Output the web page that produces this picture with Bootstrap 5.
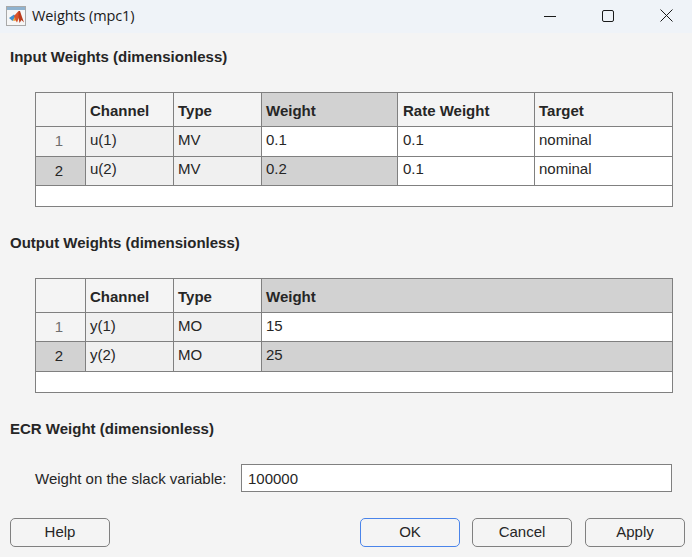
<!DOCTYPE html>
<html lang="en">
<head>
<meta charset="utf-8">
<title>Weights (mpc1)</title>
<link href="https://cdn.jsdelivr.net/npm/bootstrap@5.3.0/dist/css/bootstrap.min.css" rel="stylesheet">
<style>
html,body{height:100%;overflow:hidden}
body{background:#f4f4f4;font-family:"Liberation Sans",Arial,sans-serif;font-size:15px;color:#262626;display:flex;flex-direction:column}
.win-bar{height:33px;background:#eff3f8;padding:0 0 2px 6px;flex:none}
.win-title{font-family:"Open Sans","Noto Sans",sans-serif;font-size:14.5px;color:#1a1a1a;margin-left:6px;letter-spacing:-.1px}
.win-ctl{width:58px;height:31px;display:flex;align-items:center;justify-content:center}
.win-ctls{margin-left:auto;margin-right:-3px}
.sect-title{font-weight:700;font-size:15px;line-height:16px;color:#262626;margin:0 0 0 10px}
.grid-wrap{margin:0 20px 0 35px;flex:none}
.wt-grid{table-layout:fixed;width:637px;border-collapse:collapse;margin:0;background:#fff}
.wt-grid td,.wt-grid th{border:1px solid #808080;padding:0 3px 0 4px;font-size:15px;line-height:16px;color:#262626;vertical-align:middle;white-space:nowrap}
.wt-grid th{background:#f4f4f4;font-weight:700;height:34px;padding-top:2px}
.wt-grid td{height:30px;padding-bottom:3px;background:#fff}
.wt-grid tr.h29 td{height:29px;padding-bottom:5px}
.wt-grid tr.h29b td{height:29px;padding-bottom:3px}
.wt-grid td.ro{background:#f0f0f0}
.wt-grid .c5{padding-left:5px}
.wt-grid tr td.rownum{background:#f4f4f4;text-align:center;color:#6f6f6f;padding:0 3px 1px 0}
.wt-grid tr td.rownum.sel{color:#262626}
.wt-grid th.sel,.wt-grid td.sel,.wt-grid tr td.rownum.sel{background:#d2d2d2}
.wt-grid td.filler{height:21px;border-top:0;padding:0;background:#fff}
.slack-lbl{margin:0 15px 0 35px;color:#262626;white-space:nowrap;width:191px;padding-top:3px}
.slack-in{width:431px;height:28px;background:#fff;border:1px solid #808080;padding:0 6px;font-size:15px;color:#262626;border-radius:0;outline:0}
.act-btn{width:100px;height:29px;background:#f4f4f4;border:1px solid #808080;border-radius:5px;color:#262626;font-size:15px;line-height:23px;padding:0 0 2px}
.act-btn.dflt{border-color:#4a84ea}
.act-row{padding:0 7px 0 10px;gap:12px;margin-top:26px}
.act-spacer{margin-left:auto}
.apply-btn{margin-left:1px}
.slack-row{margin-top:27px}
.gap-a{height:16px}.gap-b{height:27px}.gap-c{height:28px}
</style>
</head>
<body>
<div class="win-bar d-flex align-items-center">
  <svg width="20" height="20" viewBox="0 0 20 20" aria-hidden="true">
    <rect x=".5" y=".5" width="19" height="19" fill="#f6f6f6" stroke="#a9a9a9"/>
    <rect x="1" y="1" width="18" height="3" fill="#8fb2cf"/>
    <path d="M3 12 8 8.500 10 10.500 6.500 15Z" fill="#3f8fd0"/>
    <path d="M8 10 12.500 5 14 9 11 16.500 9 13.500Z" fill="#d9542b"/>
    <path d="M12.500 5 14 5 16 11 18 16.500 15.500 14 13.500 17 12.500 11Z" fill="#b93a1c"/>
    <path d="M6.500 14.500 9 11 9.500 15Z" fill="#e9a23a"/>
  </svg>
  <span class="win-title">Weights (mpc1)</span>
  <div class="win-ctls d-flex">
    <div class="win-ctl"><svg width="12" height="12" viewBox="0 0 12 12"><path d="M0 6.500H12" stroke="#1a1a1a" fill="none"/></svg></div>
    <div class="win-ctl"><svg width="12" height="12" viewBox="0 0 12 12"><rect x=".5" y=".5" width="11" height="11" rx="1.500" stroke="#1a1a1a" fill="none"/></svg></div>
    <div class="win-ctl"><svg width="13" height="13" viewBox="0 0 13 13"><path d="M.5.5 12.500 12.500M12.500.5.500 12.500" stroke="#1a1a1a" fill="none"/></svg></div>
  </div>
</div>
<div class="gap-a"></div>
<h2 class="sect-title">Input Weights (dimensionless)</h2>
<div class="gap-b"></div>
<div class="grid-wrap">
  <table class="wt-grid">
    <colgroup><col style="width:50px"><col style="width:88px"><col style="width:88px"><col style="width:136px"><col style="width:137px"><col style="width:138px"></colgroup>
    <tr><th></th><th>Channel</th><th>Type</th><th class="sel">Weight</th><th class="c5">Rate Weight</th><th>Target</th></tr>
    <tr><td class="rownum">1</td><td class="ro">u(1)</td><td class="ro">MV</td><td>0.1</td><td class="c5">0.1</td><td>nominal</td></tr>
    <tr class="h29"><td class="rownum sel">2</td><td class="ro">u(2)</td><td class="ro">MV</td><td class="sel">0.2</td><td class="c5">0.1</td><td>nominal</td></tr>
    <tr><td class="filler" colspan="6"></td></tr>
  </table>
</div>
<div class="gap-c"></div>
<h2 class="sect-title">Output Weights (dimensionless)</h2>
<div class="gap-b"></div>
<div class="grid-wrap">
  <table class="wt-grid">
    <colgroup><col style="width:50px"><col style="width:88px"><col style="width:88px"><col style="width:411px"></colgroup>
    <tr><th></th><th>Channel</th><th>Type</th><th class="sel">Weight</th></tr>
    <tr class="h29b"><td class="rownum">1</td><td class="ro">y(1)</td><td class="ro">MO</td><td>15</td></tr>
    <tr><td class="rownum sel">2</td><td class="ro">y(2)</td><td class="ro">MO</td><td class="sel">25</td></tr>
    <tr><td class="filler" colspan="4"></td></tr>
  </table>
</div>
<div class="gap-c"></div>
<h2 class="sect-title">ECR Weight (dimensionless)</h2>
<div class="d-flex align-items-center slack-row">
  <label class="slack-lbl" for="slack">Weight on the slack variable:</label>
  <input id="slack" class="slack-in" type="text" value="100000">
</div>
<div class="act-row d-flex">
  <button class="act-btn" type="button">Help</button>
  <button class="act-btn dflt act-spacer" type="button">OK</button>
  <button class="act-btn" type="button">Cancel</button>
  <button class="act-btn apply-btn" type="button">Apply</button>
</div>
<script src="https://cdn.jsdelivr.net/npm/bootstrap@5.3.0/dist/js/bootstrap.bundle.min.js"></script>
</body>
</html>
